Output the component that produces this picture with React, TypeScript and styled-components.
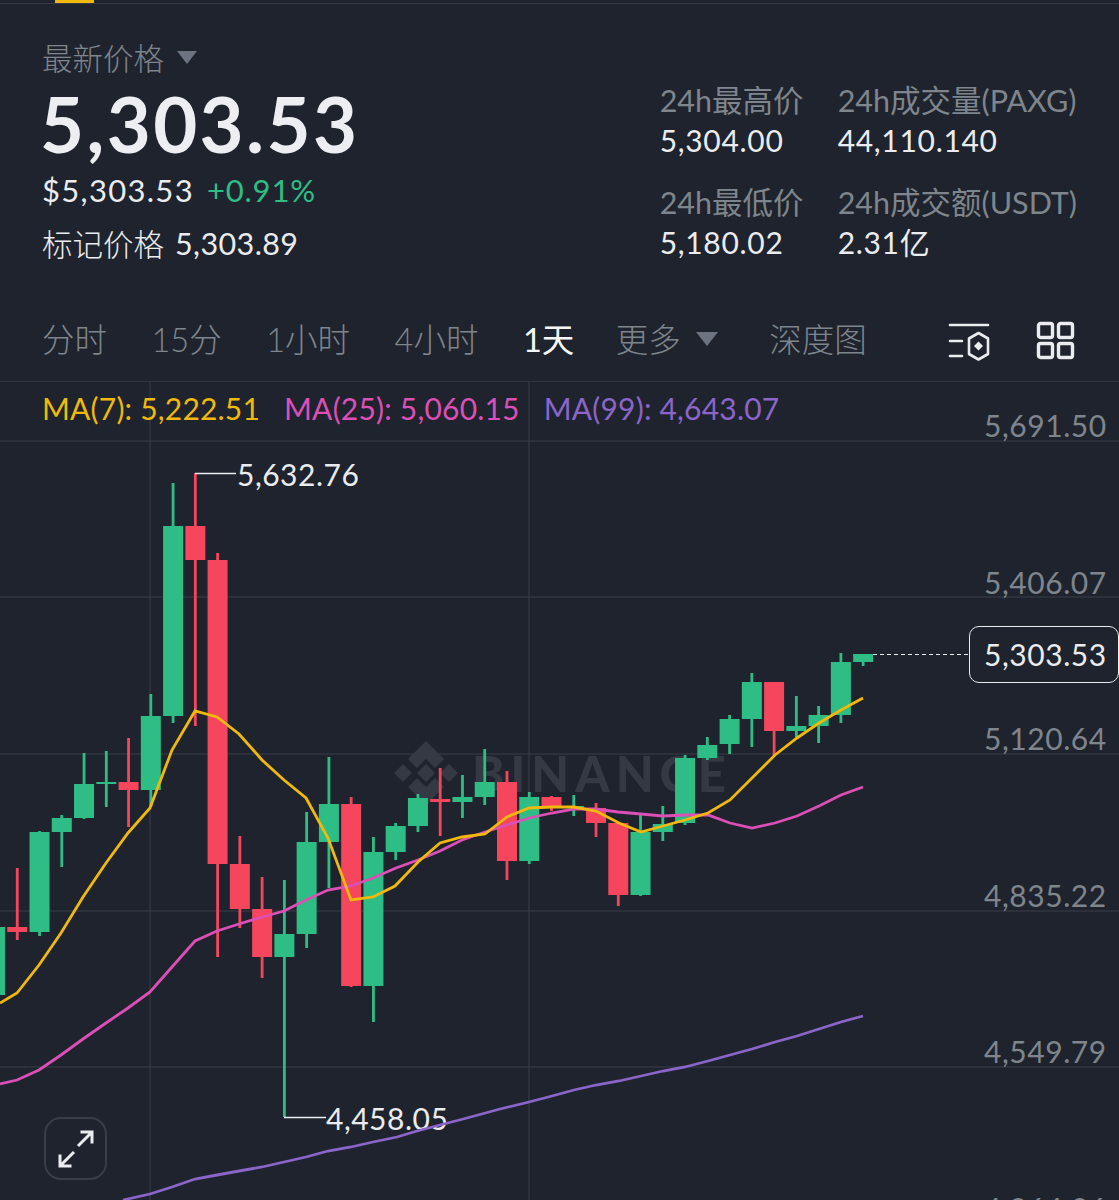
import styled, { createGlobalStyle } from "styled-components";

const BG = "#1e232d";
const GREEN = "#2ebd85";
const RED = "#f6465d";
const MUTED = "#7f858c";
const TEXT = "#eaecef";
const GRID = "#3a3f49";

const GlobalStyle = createGlobalStyle`
  html, body {
    margin: 0;
    padding: 0;
    background: ${BG};
  }
`;

// [wickTop, bodyTop, bodyBottom, wickBottom, up]
const candles: [number, number, number, number, boolean][] = [
  [927, 927, 995, 1000, true],
  [868, 927, 932, 940, false],
  [831, 832, 932, 936, true],
  [815, 818, 832, 867, true],
  [753, 784, 818, 819, true],
  [751, 782, 784, 807, true],
  [738, 782, 790, 827, false],
  [694, 716, 790, 807, true],
  [483, 526, 716, 723, true],
  [473, 526, 560, 726, false],
  [553, 560, 864, 957, false],
  [836, 864, 909, 928, false],
  [877, 909, 957, 978, false],
  [880, 934, 957, 1117, true],
  [812, 842, 934, 948, true],
  [757, 804, 842, 888, true],
  [797, 804, 986, 987, false],
  [837, 852, 986, 1022, true],
  [823, 826, 852, 860, true],
  [794, 798, 826, 832, true],
  [768, 799, 802, 836, false],
  [775, 797, 802, 818, true],
  [749, 782, 797, 805, true],
  [771, 782, 861, 880, false],
  [792, 797, 861, 864, true],
  [796, 797, 808, 811, false],
  [795, 806, 808, 816, true],
  [803, 808, 823, 837, false],
  [823, 823, 895, 906, false],
  [815, 832, 895, 896, true],
  [806, 824, 832, 841, true],
  [755, 758, 823, 825, true],
  [737, 745, 758, 760, true],
  [715, 719, 744, 754, true],
  [673, 682, 719, 747, true],
  [682, 682, 731, 755, false],
  [696, 726, 731, 737, true],
  [706, 715, 726, 743, true],
  [653, 662, 715, 723, true],
  [654, 654, 662, 666, true],
];

const candleX = (i: number) => -5 + 22.26 * i;

const ma7 = "0,1003 17,993 39,965 61,933 83,897 106,863 128,833 150,808 172,750 195,711 217,717 239,734 262,760 284,780 306,798 328,838 351,900 373,897 395,886 418,862 440,843 462,837 485,834 507,817 529,808 552,807 574,807 596,811 619,823 641,832 663,826 685,820 708,813 730,800 752,778 775,755 797,738 819,723 841,710 863,698";
const ma25 = "0,1084 17,1080 39,1070 61,1055 83,1039 106,1023 128,1008 150,992 172,967 195,941 217,931 239,924 262,917 284,911 306,900 328,890 351,886 373,878 396,868 418,860 440,851 462,840 485,832 507,825 529,818 552,813 574,809 596,809 618,812 641,814 663,816 685,815 708,815 730,823 752,828 775,823 797,816 819,806 841,795 863,787";
const ma99 = "123,1200 150,1194 172,1187 195,1179 217,1175 239,1171 262,1167 284,1162 306,1157 328,1151 351,1147 373,1142 397,1137 417,1131 440,1125 467,1118 500,1109 529,1102 552,1096 574,1090 596,1085 619,1081 641,1076 663,1071 685,1067 708,1061 730,1055 752,1049 775,1042 797,1036 819,1029 841,1022 863,1016";

const axisLabels = [
  { y: 425, text: "5,691.50" },
  { y: 582, text: "5,406.07" },
  { y: 738, text: "5,120.64" },
  { y: 895, text: "4,835.22" },
  { y: 1051, text: "4,549.79" },
  { y: 1208, text: "4,264.36" },
];

const App = () => {
  return (
    <Page>
      <GlobalStyle />
      <TopStrip>
        <ActiveMark />
      </TopStrip>

      <Header>
        <PriceBlock>
          <PriceKind>
            最新价格
            <Caret $size={10} />
          </PriceKind>
          <BigPrice>5,303.53</BigPrice>
          <SubRow>
            <span>$5,303.53</span>
            <Change>+0.91%</Change>
          </SubRow>
          <MarkRow>
            <MarkLabel>标记价格</MarkLabel>
            <span>5,303.89</span>
          </MarkRow>
        </PriceBlock>

        <Stats>
          <Stat>
            <StatLabel>24h最高价</StatLabel>
            <StatValue>5,304.00</StatValue>
          </Stat>
          <Stat>
            <StatLabel>24h成交量(PAXG)</StatLabel>
            <StatValue>44,110.140</StatValue>
          </Stat>
          <Stat>
            <StatLabel>24h最低价</StatLabel>
            <StatValue>5,180.02</StatValue>
          </Stat>
          <Stat>
            <StatLabel>24h成交额(USDT)</StatLabel>
            <StatValue>2.31亿</StatValue>
          </Stat>
        </Stats>
      </Header>

      <Tabs>
        <Tab>分时</Tab>
        <Tab>15分</Tab>
        <Tab>1小时</Tab>
        <Tab>4小时</Tab>
        <Tab $active>1天</Tab>
        <Tab $nudge={-3}>
          更多
          <Caret $size={11} />
        </Tab>
        <Tab $nudge={7}>深度图</Tab>
        <TabIcons>
          <svg width="42" height="42" viewBox="0 0 42 42" fill="none" stroke={TEXT}>
            <path d="M2 5H40" strokeWidth="2.6" strokeLinecap="round" />
            <path d="M2 21H14M2 36H14" strokeWidth="2.6" strokeLinecap="round" />
            <path d="M30.5 13L40 18.5V34L30.5 39.5L21 34V18.5Z" strokeWidth="2.6" strokeLinejoin="round" />
            <path d="M30.5 21.5L35 26L30.5 30.5L26 26Z" fill={TEXT} stroke="none" />
          </svg>
          <svg width="40" height="40" viewBox="0 0 40 40" fill="none" stroke={TEXT} strokeWidth="3.4">
            <rect x="2.5" y="2.5" width="14" height="14" rx="2" />
            <rect x="22.5" y="2.5" width="14" height="14" rx="2" />
            <rect x="2.5" y="22.5" width="14" height="14" rx="2" />
            <rect x="22.5" y="22.5" width="14" height="14" rx="2" />
          </svg>
        </TabIcons>
      </Tabs>

      <Chart>
        <ChartSvg viewBox="0 382 1119 818" width="1119" height="818">
          {[441, 597, 754, 911, 1067].map((y) => (
            <line key={y} x1="0" x2="1119" y1={y} y2={y} stroke={GRID} strokeWidth="1" />
          ))}
          {[150, 529].map((x) => (
            <line key={x} x1={x} x2={x} y1="382" y2="1200" stroke={GRID} strokeWidth="1" />
          ))}

          <g fill="#343943">
            <polygon points="426,741 444,759 435,768 426,759 417,768 408,759" />
            <polygon points="426,764 435,773 426,782 417,773" />
            <polygon points="403,764 412,773 403,782 394,773" />
            <polygon points="449,764 458,773 449,782 440,773" />
            <polygon points="426,805 408,787 417,778 426,787 435,778 444,787" />
          </g>
          <Watermark x="472" y="792">BINANCE</Watermark>

          {candles.map(([wickTop, top, bottom, wickBottom, up], i) => {
            const x = candleX(i);
            const color = up ? GREEN : RED;
            return (
              <g key={i} fill={color}>
                <rect x={x - 1.4} y={wickTop} width="2.8" height={wickBottom - wickTop} />
                <rect x={x - 10} y={top} width="20" height={Math.max(bottom - top, 2)} />
              </g>
            );
          })}

          <path d="M195 473.5H236M284 1117.5H326" stroke={TEXT} strokeWidth="1.4" fill="none" />
          <ExtremeText x="237" y="486">5,632.76</ExtremeText>
          <ExtremeText x="326" y="1130">4,458.05</ExtremeText>

          <polyline points={ma99} fill="none" stroke="#8b65c9" strokeWidth="2.8" />
          <polyline points={ma25} fill="none" stroke="#dc4fb6" strokeWidth="2.8" />
          <polyline points={ma7} fill="none" stroke="#f0b90b" strokeWidth="2.8" />

          <line x1="873" x2="970" y1="654.5" y2="654.5" stroke={TEXT} strokeWidth="1.2" strokeDasharray="4 3" />
        </ChartSvg>

        <Legend>
          <LegendItem $color="#f0b90b">MA(7): 5,222.51</LegendItem>
          <LegendItem $color="#dc4fb6">MA(25): 5,060.15</LegendItem>
          <LegendItem $color="#8b65c9">MA(99): 4,643.07</LegendItem>
        </Legend>

        {axisLabels.map((label) => (
          <AxisLabel key={label.text} $top={label.y - 382}>
            {label.text}
          </AxisLabel>
        ))}

        <LastPrice>5,303.53</LastPrice>

        <ExpandButton>
          <svg width="40" height="40" viewBox="0 0 40 40" fill="none" stroke={TEXT} strokeWidth="3">
            <path d="M22 17L36 3M24.5 3H36V14.5" />
            <path d="M18 23L4 37M4 25.5V37H15.5" />
          </svg>
        </ExpandButton>
      </Chart>
    </Page>
  );
};

const Page = styled.div`
  width: 1119px;
  height: 1200px;
  overflow: hidden;
  display: flex;
  flex-direction: column;
  background: ${BG};
  color: ${TEXT};
  font-family: Lato, "Noto Sans CJK SC", sans-serif;
`;

const TopStrip = styled.div`
  height: 3px;
  flex: none;
  border-bottom: 1px solid #343a44;
`;

const ActiveMark = styled.div`
  width: 39px;
  height: 3px;
  margin-left: 55px;
  background: #f0b90b;
`;

const Header = styled.div`
  display: flex;
  justify-content: space-between;
  height: 293px;
  flex: none;
  box-sizing: border-box;
  padding: 32px 42px 0;
`;

const PriceBlock = styled.div`
  display: flex;
  flex-direction: column;
`;

const PriceKind = styled.div`
  display: flex;
  align-items: center;
  gap: 13px;
  height: 41px;
  margin-bottom: 3px;
  font-size: 30.5px;
  font-weight: 300;
  color: ${MUTED};
`;

const Caret = styled.i<{ $size: number }>`
  display: inline-block;
  width: 0;
  height: 0;
  margin-top: 2px;
  border-left: ${(props) => props.$size}px solid transparent;
  border-right: ${(props) => props.$size}px solid transparent;
  border-top: ${(props) => props.$size + 3}px solid #6e7382;
`;

const BigPrice = styled.div`
  height: 88px;
  margin-left: -2px;
  line-height: 88px;
  font-size: 76px;
  font-weight: 700;
  letter-spacing: 2.4px;
  color: #eceef2;
`;

const SubRow = styled.div`
  display: flex;
  gap: 13px;
  height: 44px;
  line-height: 44px;
  font-size: 31px;
  letter-spacing: 1.3px;
`;

const Change = styled.span`
  color: ${GREEN};
  letter-spacing: 0.8px;
`;

const MarkRow = styled.div`
  display: flex;
  align-items: center;
  gap: 11px;
  height: 62px;
  font-size: 30.5px;
  letter-spacing: 0.4px;
`;

const MarkLabel = styled.span`
  font-weight: 300;
  letter-spacing: 0;
`;

const Stats = styled.div`
  display: grid;
  grid-template-columns: 178px auto;
  grid-auto-rows: 102px;
  padding-top: 44px;
`;

const Stat = styled.div`
  display: flex;
  flex-direction: column;
`;

const StatLabel = styled.div`
  height: 40px;
  line-height: 40px;
  font-size: 30.5px;
  font-weight: 400;
  color: ${MUTED};
  white-space: nowrap;
`;

const StatValue = styled.div`
  height: 40px;
  line-height: 40px;
  font-size: 30px;
  letter-spacing: 0.7px;
`;

const Tabs = styled.div`
  display: flex;
  align-items: center;
  gap: 44.5px;
  height: 85px;
  flex: none;
  box-sizing: border-box;
  padding: 0 43px 3px 42px;
  border-bottom: 1px solid #2f343e;
`;

const Tab = styled.div<{ $active?: boolean; $nudge?: number }>`
  display: flex;
  align-items: center;
  gap: 15px;
  margin-left: ${(props) => props.$nudge ?? 0}px;
  font-size: 32.5px;
  font-weight: ${(props) => (props.$active ? 400 : 300)};
  color: ${(props) => (props.$active ? "#f5f6f8" : MUTED)};
`;

const TabIcons = styled.div`
  display: flex;
  align-items: center;
  gap: 46px;
  margin: 7px 0 0 auto;
`;

const Chart = styled.div`
  position: relative;
  flex: 1;
`;

const ChartSvg = styled.svg`
  position: absolute;
  inset: 0;
  display: block;
`;

const Watermark = styled.text`
  font-family: Lato, sans-serif;
  font-size: 49px;
  font-weight: 900;
  letter-spacing: 6px;
  fill: #343943;
`;

const ExtremeText = styled.text`
  font-family: Lato, sans-serif;
  font-size: 30px;
  fill: ${TEXT};
  letter-spacing: 0.5px;
`;

const Legend = styled.div`
  position: relative;
  display: flex;
  gap: 24px;
  padding: 6px 0 0 42px;
  font-size: 30px;
  line-height: 40px;
`;

const LegendItem = styled.span<{ $color: string }>`
  color: ${(props) => props.$color};
  letter-spacing: 0.2px;
`;

const AxisLabel = styled.div<{ $top: number }>`
  position: absolute;
  top: ${(props) => props.$top}px;
  left: 984px;
  transform: translateY(-50%);
  font-size: 30px;
  line-height: 40px;
  letter-spacing: 0.55px;
  color: ${MUTED};
`;

const LastPrice = styled.div`
  position: absolute;
  top: 244px;
  left: 969px;
  width: 150px;
  height: 57px;
  box-sizing: border-box;
  padding-left: 14px;
  border: 1.5px solid ${TEXT};
  border-radius: 10px;
  background: ${BG};
  font-size: 30px;
  line-height: 54px;
  letter-spacing: 0.55px;
`;

const ExpandButton = styled.div`
  position: absolute;
  left: 44px;
  top: 735px;
  width: 63px;
  height: 63px;
  box-sizing: border-box;
  display: flex;
  align-items: center;
  justify-content: center;
  border: 2px solid #383d47;
  border-radius: 17px;
`;

export default App;
